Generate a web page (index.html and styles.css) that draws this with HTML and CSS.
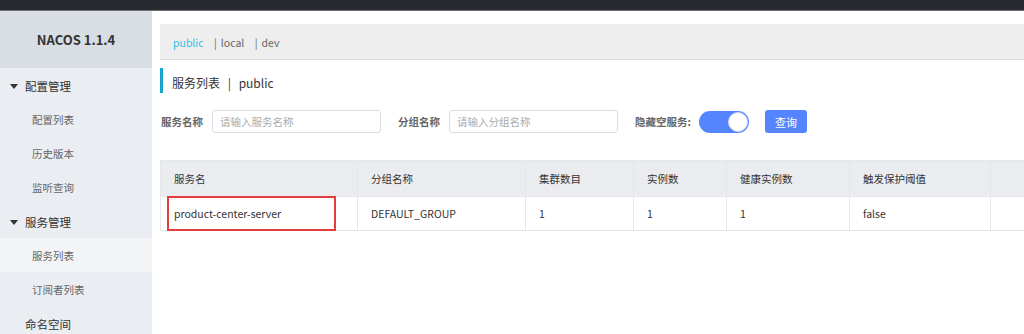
FILE: index.html
```html
<!DOCTYPE html>
<html lang="zh">
<head>
    <meta charset="UTF-8">
    <meta name="viewport" content="width=device-width, initial-scale=1.0">
    <title>Nacos</title>
    <link rel="stylesheet" href="styles.css">
</head>
<body>
    <div class="topbar"></div>
    <div class="layout">
        <div class="sidebar">
            <div class="logo">NACOS 1.1.4</div>
            <div class="menu-group"><span class="arrow"></span>配置管理</div>
            <div class="menu-item">配置列表</div>
            <div class="menu-item">历史版本</div>
            <div class="menu-item">监听查询</div>
            <div class="menu-group"><span class="arrow"></span>服务管理</div>
            <div class="menu-item active">服务列表</div>
            <div class="menu-item">订阅者列表</div>
            <div class="menu-group plain">命名空间</div>
        </div>
        <div class="main">
            <div class="nsbar">
                <span class="ns current">public</span>
                <span class="ns"><span class="bar">|</span>local</span>
                <span class="ns"><span class="bar">|</span>dev</span>
            </div>
            <div class="title">服务列表 <span class="sep">|</span> public</div>
            <div class="search">
                <label>服务名称</label>
                <input type="text" placeholder="请输入服务名称">
                <label class="gap">分组名称</label>
                <input type="text" placeholder="请输入分组名称">
                <label class="gap">隐藏空服务:</label>
                <div class="switch"><div class="knob"></div></div>
                <button>查询</button>
            </div>
            <table class="grid">
                <colgroup>
                    <col style="width:197px">
                    <col style="width:168px">
                    <col style="width:108px">
                    <col style="width:93px">
                    <col style="width:123px">
                    <col style="width:141px">
                    <col>
                </colgroup>
                <thead>
                    <tr>
                        <th>服务名</th>
                        <th>分组名称</th>
                        <th>集群数目</th>
                        <th>实例数</th>
                        <th>健康实例数</th>
                        <th>触发保护阈值</th>
                        <th></th>
                    </tr>
                </thead>
                <tbody>
                    <tr>
                        <td><span class="mark">product-center-server</span></td>
                        <td>DEFAULT_GROUP</td>
                        <td>1</td>
                        <td>1</td>
                        <td>1</td>
                        <td>false</td>
                        <td></td>
                    </tr>
                </tbody>
            </table>
        </div>
    </div>
</body>
</html>
```

FILE: styles.css
```css
*{
    box-sizing: border-box;
}
body{
    margin: 0;
    font-family: "Noto Sans CJK SC", "Noto Sans", sans-serif;
    font-size: 10.5px;
    color: #333;
    background: #fff;
    overflow: hidden;
}
.topbar{
    height: 11px;
    background-color: #262a30;
    border-bottom: 1px solid #6b6f75;
}
.layout{
    display: flex;
    height: 323px;
}
.sidebar{
    width: 152px;
    flex-shrink: 0;
    background-color: #eaedf1;
}
.logo{
    height: 57px;
    background-color: #d9dee4;
    font-weight: bold;
    font-size: 13px;
    text-align: center;
    line-height: 57px;
    color: #333;
}
.menu-group{
    height: 34px;
    line-height: 36px;
    padding-left: 10px;
    font-size: 11.5px;
    color: #333;
}
.menu-group.plain{
    padding-left: 25px;
}
.arrow{
    display: inline-block;
    width: 0;
    height: 0;
    border-left: 4px solid transparent;
    border-right: 4px solid transparent;
    border-top: 5px solid #333;
    margin-right: 7px;
    vertical-align: 2px;
}
.menu-item{
    height: 34px;
    line-height: 35px;
    padding-left: 32px;
    color: #666;
}
.menu-item.active{
    background-color: #f3f4f6;
}
.main{
    flex: 1;
    padding: 13px 0 0 8px;
    overflow: hidden;
}
.nsbar{
    height: 36px;
    background-color: #eeeeee;
    border-bottom: 1px solid #dcdcdc;
    padding-left: 13px;
    line-height: 37px;
    color: #666;
    font-size: 10.5px;
}
.ns{
    margin-right: 8px;
}
.ns.current{
    color: #33bde0;
}
.bar{
    margin-right: 4px;
}
.title{
    margin-top: 8px;
    height: 25px;
    line-height: 29px;
    border-left: 3px solid #1aa3d0;
    padding-left: 9px;
    font-size: 12px;
    color: #333;
}
.sep{
    margin: 0 5px;
}
.search{
    display: flex;
    align-items: center;
    margin-top: 17px;
    height: 23px;
}
.search label{
    font-weight: bold;
    color: #666;
    margin-right: 9px;
    margin-left: 1px;
}
.search label.gap{
    margin-left: 17px;
}
.search input{
    width: 169px;
    height: 23px;
    border: 1px solid #dcdee3;
    border-radius: 3px;
    padding: 0 7px;
    font-family: inherit;
    font-size: 10.5px;
}
.search input::placeholder{
    color: #a8aaad;
}
.switch{
    width: 50px;
    height: 22px;
    border-radius: 11px;
    background-color: #5584ff;
    padding: 1px;
    display: flex;
    justify-content: flex-end;
    margin-left: -1px;
}
.knob{
    width: 20px;
    height: 20px;
    border-radius: 50%;
    background: #fff;
    border: 1px solid #d0d9ff;
}
.search button{
    margin-left: 16px;
    width: 42px;
    height: 23px;
    border: none;
    border-radius: 3px;
    background-color: #5584ff;
    color: #fff;
    font-family: inherit;
    font-size: 11px;
}
.grid{
    margin-top: 27px;
    width: 900px;
    border-collapse: collapse;
    table-layout: fixed;
}
.grid th, .grid td{
    border: 1px solid #e6e7eb;
    text-align: left;
    padding: 0 13px;
    font-weight: normal;
}
.grid th{
    height: 36px;
    background-color: #ebecf0;
    color: #333;
}
.grid td{
    height: 34px;
    color: #333;
}
.grid td:first-child{
    position: relative;
}
.mark::before{
    content: "";
    position: absolute;
    left: 6px;
    right: 21px;
    top: -1px;
    bottom: -1px;
    border: 2px solid #e43d3d;
}
```
